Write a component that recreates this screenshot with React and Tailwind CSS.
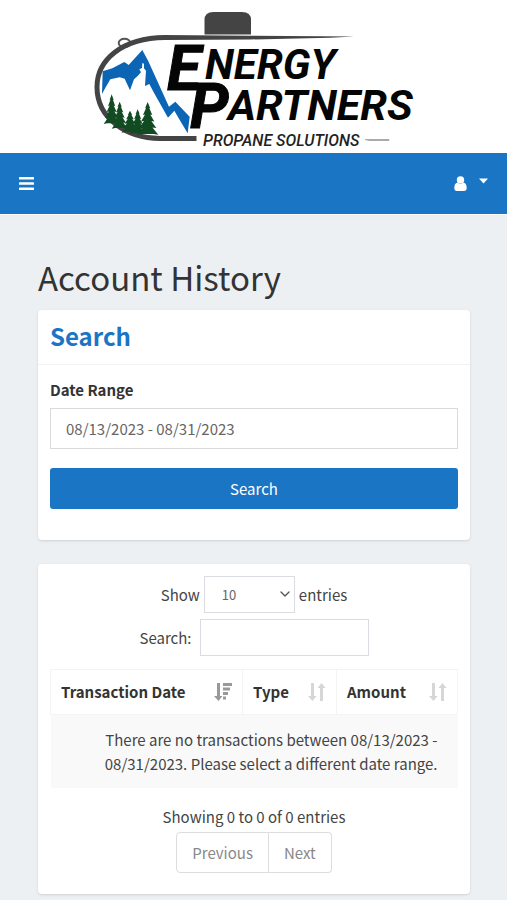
import React, { useState } from "react";
import { ChevronDown } from "lucide-react";

const TREES = [
  { x: 80, top: 283, bottom: 372, half: 22 },
  { x: 104, top: 305, bottom: 386, half: 22 },
  { x: 135, top: 332, bottom: 398, half: 24 },
  { x: 158, top: 328, bottom: 402, half: 22 },
  { x: 188, top: 306, bottom: 404, half: 30 },
];

// jagged fir tree, five branches on each side
const treePoints = ({ x, top, bottom, half }) => {
  const step = (bottom - top) / 5;
  const right = [];
  const left = [];
  for (let i = 1; i <= 5; i++) {
    const w = (half * i) / 5 + 2;
    const y = top + step * i;
    right.push(`${x + w},${y}`, `${x + w * 0.55},${y - 2}`);
    left.unshift(`${x - w * 0.55},${y - 2}`, `${x - w},${y}`);
  }
  return [`${x},${top}`, ...right, ...left].join(" ");
};

const Logo = () => (
  <svg
    viewBox="89 0 329 152"
    className="block w-[329px] h-[152px]"
    role="img"
    aria-label="Energy Partners Propane Solutions"
  >
    <path d="M204.500 34.500V20q0-8 9-8h28.500q9 0 9 8v14.500z" fill="#444" />
    <ellipse cx="124.500" cy="43" rx="5.800" ry="4.200" fill="none" stroke="#555" strokeWidth="2" />
    <path
      d="M196.500 138.400H160C126 138.400 97 118 97 87C97 60 122 38 165 37.600"
      fill="none"
      stroke="#444"
      strokeWidth="5"
    />
    <path d="M164 35.100L250 35.800L354 36.500L330 37.800L250 39.500L164 40.100z" fill="#444" />

    <g transform="translate(85 0) scale(0.3333)">
      <path
        d="M51 282L53 214L82 205L118 186L131 195L172 150L190 184L252 320L271 305L314 350L308 400L282 356L268 332L249 353L206 277L193 252L180 258L183 212L177 205L177 191L172 189L171 204L163 208L168 217L158 228L147 238L135 271L119 236L104 232L76 238L62 262z"
        fill="#0b64b4"
      />
      {TREES.map((tree) => (
        <polygon key={tree.x} points={treePoints(tree)} fill="#124a22" />
      ))}
    </g>

    <g fontFamily="Roboto, sans-serif" fontStyle="italic" fontWeight="700" fill="#050505">
      <g stroke="#050505" strokeWidth="1">
        <text x="167" y="90" fontSize="62">E</text>
        <text x="190" y="128" fontSize="62">P</text>
      </g>
      <text x="205" y="79" fontSize="42">NERGY</text>
      <text x="228" y="120" fontSize="43">ARTNERS</text>
      <text x="203" y="145.500" fontSize="16" fontWeight="500" fill="#222">
        PROPANE SOLUTIONS
      </text>
    </g>
    <path d="M168.500 83.500H218V90H168z" fill="#050505" />
    <path d="M365 139.500H389V140.500H370z" fill="#aaa" stroke="#aaa" />
  </svg>
);

const SortIcon = ({ active = false }) =>
  active ? (
    <svg viewBox="0 0 18 18" className="size-[18px] shrink-0" fill="#999" aria-hidden="true">
      <path d="M3 0h3v13h2.500L4.500 18L0 13h3z" />
      <path d="M9 0h9v3H9zM9 4.500h7v3H9zM9 9h5v3H9zM9 13.500h3v3H9z" />
    </svg>
  ) : (
    <svg viewBox="0 0 18 18" className="size-[18px] shrink-0" fill="#d6d6d6" aria-hidden="true">
      <path d="M3 0h3v13h2.500L4.500 18L0 13h3z" />
      <path d="M12 18h3V5h2.500L13.500 0L9.500 5H12z" />
    </svg>
  );

const COLUMNS = [
  { label: "Transaction Date", active: true, width: "w-[192px]" },
  { label: "Type", width: "w-[94px]" },
  { label: "Amount" },
];

const App = () => {
  const [range, setRange] = useState("08/13/2023 - 08/31/2023");
  const [pageSize, setPageSize] = useState("10");
  const [query, setQuery] = useState("");

  return (
    <div className="min-h-screen bg-[#ecf0f3] font-['Noto_Sans_CJK_SC','Noto_Sans',sans-serif] text-[15px] leading-6 text-[#444]">
      <header>
        <div className="flex h-[153px] justify-center bg-white">
          <Logo />
        </div>
        <nav className="flex h-[62px] items-center justify-between border-b border-white bg-[#1b75c5] px-[19px]">
          <button type="button" aria-label="Toggle navigation">
            <svg viewBox="0 0 15 13" className="h-[13px] w-[15px]" fill="#fff">
              <rect width="15" height="2.600" rx="0.600" />
              <rect y="5.200" width="15" height="2.600" rx="0.600" />
              <rect y="10.400" width="15" height="2.600" rx="0.600" />
            </svg>
          </button>
          <button type="button" aria-label="Account menu" className="flex gap-3">
            <svg viewBox="0 0 13 15" className="h-[15px] w-[13px]" fill="#fff">
              <path d="M3.500 6.500C1 7 .3 9.500.3 12C.3 13.800 1.300 15 3 15h7c1.700 0 2.700-1.200 2.700-3c0-2.500-.7-5-3.200-5.500Q6.500 9.200 3.500 6.500z" />
              <circle cx="6.500" cy="3.900" r="3.700" />
            </svg>
            <svg viewBox="0 0 9 15" className="h-[15px] w-[9px]" fill="#fff">
              <path d="M0 2.500h9L4.500 7.500z" />
            </svg>
          </button>
        </nav>
      </header>

      <main className="pt-10 pr-[37px] pb-1.5 pl-[38px]">
        <h1 className="mb-2.5 text-[33px] leading-[45px] text-[#333]">Account History</h1>

        <section className="rounded bg-white pb-[31px] shadow-sm">
          <h2 className="border-b border-[#f0f2f4] px-3 pt-2 pb-2.5 text-2xl leading-9 font-bold text-[#1b75c5]">
            Search
          </h2>
          <form className="px-3 pt-[13px]" onSubmit={(e) => e.preventDefault()}>
            <label htmlFor="range" className="block font-bold text-[#333]">
              Date Range
            </label>
            <input
              id="range"
              value={range}
              onChange={(e) => setRange(e.target.value)}
              className="mt-1.5 block h-[41px] w-full border border-[#d9dadc] px-[15px] text-[#666]"
            />
            <button
              type="submit"
              className="mt-[19px] block h-[41px] w-full rounded-[3px] bg-[#1b75c5] text-white"
            >
              Search
            </button>
          </form>
        </section>

        <section className="mt-6 rounded bg-white px-3 pt-3 pb-[21px] shadow-sm">
          <div className="flex items-center justify-center gap-1">
            <label htmlFor="size">Show</label>
            <div className="relative">
              <select
                id="size"
                value={pageSize}
                onChange={(e) => setPageSize(e.target.value)}
                className="block h-[37px] w-[91px] appearance-none border border-[#d9dde2] px-[17px] text-[13px] text-[#666]"
              >
                <option>10</option>
                <option>25</option>
                <option>50</option>
                <option>100</option>
              </select>
              <ChevronDown
                size={16}
                className="pointer-events-none absolute top-2.5 right-0.5 text-[#555]"
              />
            </div>
            <span>entries</span>
          </div>
          <div className="mt-1.5 flex items-center justify-center gap-2">
            <label htmlFor="query">Search:</label>
            <input
              id="query"
              type="search"
              value={query}
              onChange={(e) => setQuery(e.target.value)}
              className="h-[37px] w-[169px] border border-[#d9dde2] px-3"
            />
          </div>

          <table className="mt-[13px] w-full table-fixed border-collapse">
            <thead>
              <tr>
                {COLUMNS.map((col) => (
                  <th
                    key={col.label}
                    scope="col"
                    className={`h-[45px] border border-[#f4f4f4] px-2.5 text-left font-bold text-[#333] ${col.width || ""}`}
                  >
                    <button type="button" className="flex w-full items-center justify-between">
                      {col.label}
                      <SortIcon active={col.active} />
                    </button>
                  </th>
                ))}
              </tr>
            </thead>
            <tbody>
              <tr className="bg-[#f9f9f9]">
                <td colSpan={3} className="pt-[13px] pr-5 pb-3 pl-10 text-right">
                  There are no transactions between 08/13/2023 - 08/31/2023. Please select a
                  different date range.
                </td>
              </tr>
            </tbody>
          </table>

          <p className="mt-[17px] text-center">Showing 0 to 0 of 0 entries</p>
          <div className="mt-[3px] flex justify-center text-[#888]">
            <button type="button" className="h-[41px] rounded-l border border-[#ddd] px-[15px]">
              Previous
            </button>
            <button
              type="button"
              className="h-[41px] rounded-r border border-l-0 border-[#ddd] px-[15px]"
            >
              Next
            </button>
          </div>
        </section>
      </main>
    </div>
  );
};

export default App;
